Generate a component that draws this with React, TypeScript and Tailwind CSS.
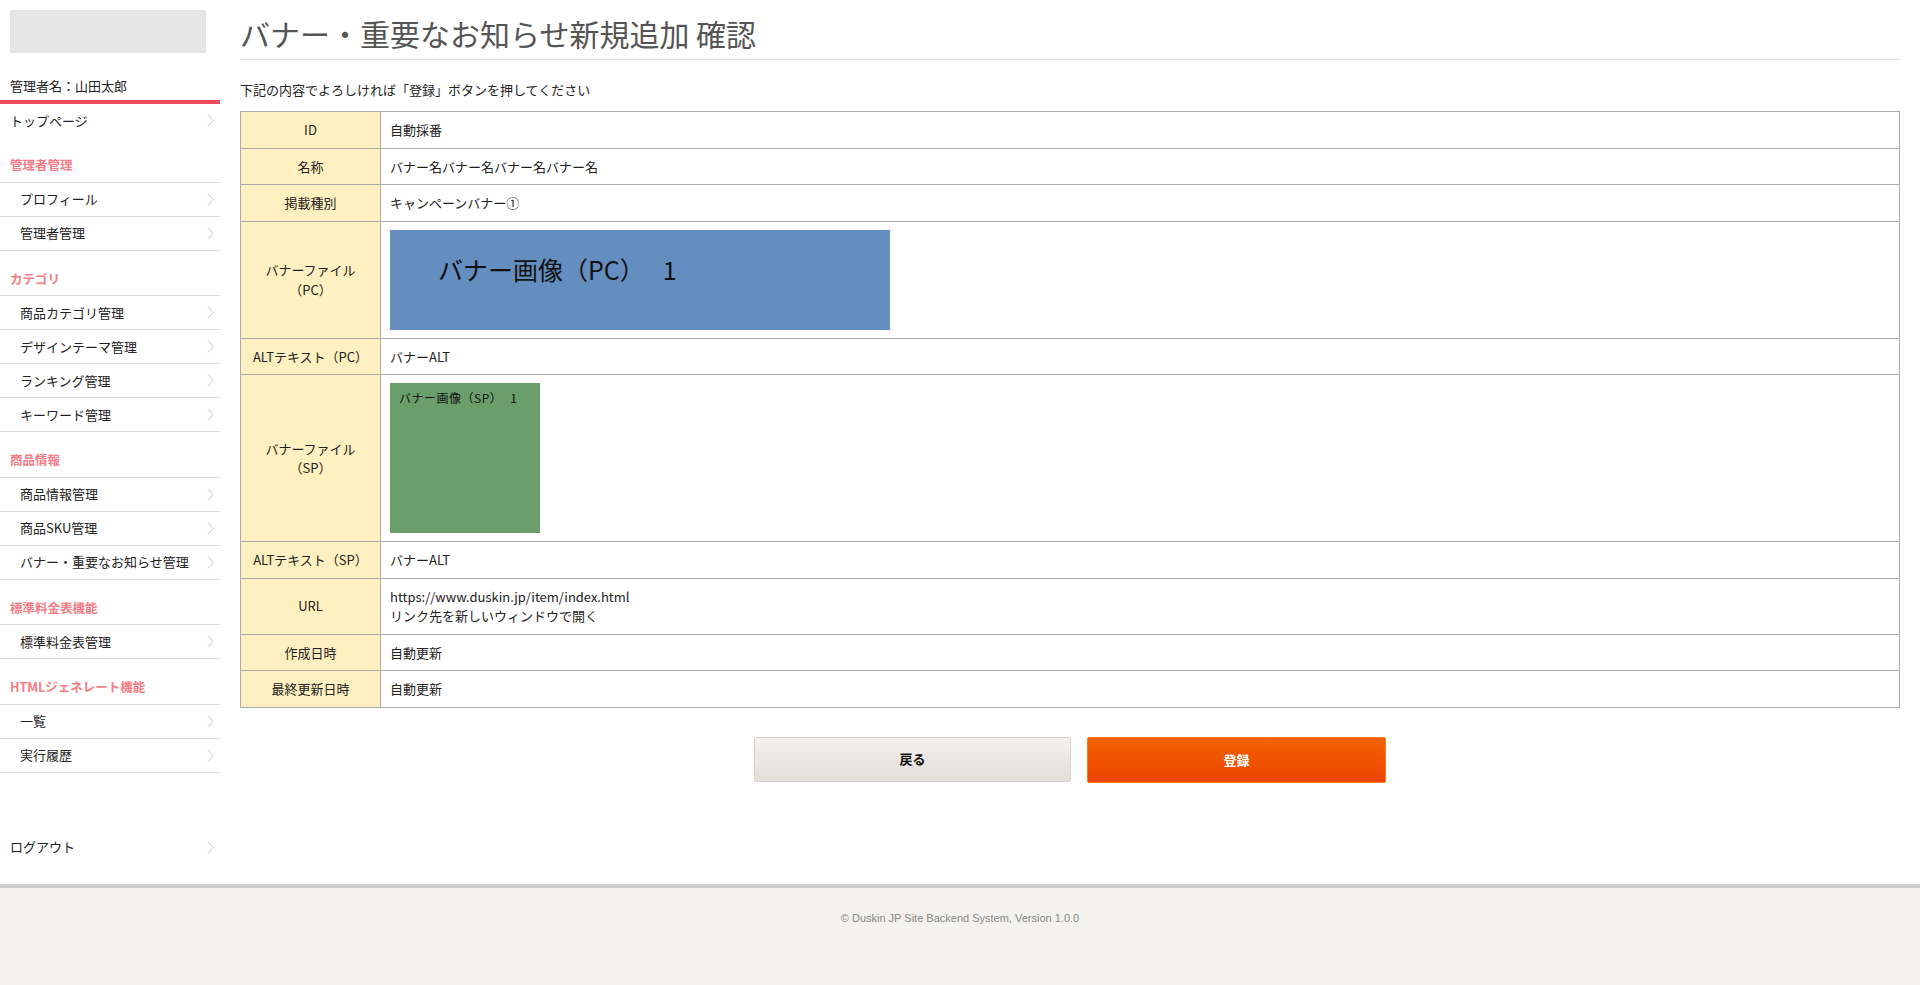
import React from 'react';

const FONT = { fontFamily: '"Noto Sans CJK JP", "Liberation Sans", sans-serif' };

interface NavSection {
  title: string;
  items: string[];
}

const sections: NavSection[] = [
  { title: '管理者管理', items: ['プロフィール', '管理者管理'] },
  { title: 'カテゴリ', items: ['商品カテゴリ管理', 'デザインテーマ管理', 'ランキング管理', 'キーワード管理'] },
  { title: '商品情報', items: ['商品情報管理', '商品SKU管理', 'バナー・重要なお知らせ管理'] },
  { title: '標準料金表機能', items: ['標準料金表管理'] },
  { title: 'HTMLジェネレート機能', items: ['一覧', '実行履歴'] },
];

const Chevron = () => (
  <svg width="7" height="13" viewBox="0 0 7 13" className="block shrink-0">
    <polyline points="1,0.5 6,6.5 1,12.5" fill="none" stroke="#c8c8c8" strokeWidth="1" />
  </svg>
);

const NavRow = ({ label }: { label: string }) => (
  <div className="flex h-[34px] items-center justify-between border-b border-[#dcdcdc] pl-[20px] pr-[6px] text-[13px] text-[#222]">
    <span>{label}</span>
    <Chevron />
  </div>
);

const Sidebar = () => (
  <aside className="w-[220px] shrink-0 pb-[20px]">
    <div className="ml-[10px] mt-[10px] h-[43px] w-[196px] bg-[#e5e5e5]" />
    <div className="mt-[23px] border-b-4 border-[#eb4c5c] px-[10px] pb-[4px] text-[13px] leading-[20px] text-[#222]">
      管理者名：山田太郎
    </div>
    <div className="flex h-[33px] items-center justify-between pl-[10px] pr-[6px] text-[13px] text-[#222]">
      <span>トップページ</span>
      <Chevron />
    </div>
    {sections.map((s) => (
      <div key={s.title}>
        <div className="border-b border-[#dcdcdc] pl-[10px] pb-[7.5px] pt-[19px] text-[12.5px] font-bold leading-[18px] text-[#f47c86]">
          {s.title}
        </div>
        {s.items.map((it) => (
          <NavRow key={it} label={it} />
        ))}
      </div>
    ))}
    <div className="mt-[58px] flex h-[33px] items-center justify-between pl-[10px] pr-[6px] text-[13px] text-[#222]">
      <span>ログアウト</span>
      <Chevron />
    </div>
  </aside>
);

const Row = ({ label, children }: { label: React.ReactNode; children: React.ReactNode }) => (
  <tr>
    <th className="w-[140px] border border-[#aaaaaa] bg-[#fef0c0] px-[6px] py-[8px] text-center align-middle text-[13px] font-normal leading-[19.5px] text-[#222]">
      {label}
    </th>
    <td className="border border-[#aaaaaa] px-[9px] py-[8px] align-middle text-[13px] leading-[19.5px] text-[#222]">
      {children}
    </td>
  </tr>
);

export default function App() {
  return (
    <div className="flex min-h-screen flex-col bg-white" style={FONT}>
      <div className="flex">
        <Sidebar />
        <main className="ml-[20px] mr-[20px] flex-1">
          <h1 className="border-b border-[#dddddd] pb-[8px] pt-[15px] text-[30px] font-normal leading-[36px] text-[#555]">
            バナー・重要なお知らせ新規追加 確認
          </h1>
          <p className="mb-[12px] mt-[21px] text-[13px] leading-[18px] text-[#222]">
            下記の内容でよろしければ「登録」ボタンを押してください
          </p>
          <table className="w-full border-collapse border border-[#aaaaaa]">
            <tbody>
              <Row label="ID">自動採番</Row>
              <Row label="名称">バナー名バナー名バナー名バナー名</Row>
              <Row label="掲載種別">キャンペーンバナー①</Row>
              <Row
                label={
                  <>
                    バナーファイル
                    <br />
                    （PC）
                  </>
                }
              >
                <div className="flex h-[100px] w-[500px] items-start bg-[#638ebf] pl-[48px] pt-[24px] text-[25px] leading-[30px] text-[#111]">
                  <span>バナー画像（PC）</span>
                  <span className="ml-[18px]">1</span>
                </div>
              </Row>
              <Row label="ALTテキスト（PC）">バナーALT</Row>
              <Row
                label={
                  <>
                    バナーファイル
                    <br />
                    （SP）
                  </>
                }
              >
                <div className="flex h-[150px] w-[150px] items-start bg-[#6a9f6c] pl-[9px] pt-[6px] text-[12px] leading-[18px] tracking-[0.5px] text-[#111]">
                  <span>バナー画像（SP）</span>
                  <span className="ml-[8px]">1</span>
                </div>
              </Row>
              <Row label="ALTテキスト（SP）">バナーALT</Row>
              <Row label="URL">
                https://www.duskin.jp/item/index.html
                <br />
                リンク先を新しいウィンドウで開く
              </Row>
              <Row label="作成日時">自動更新</Row>
              <Row label="最終更新日時">自動更新</Row>
            </tbody>
          </table>
          <div className="mt-[29px] flex justify-center gap-[16px]">
            <button className="h-[45px] w-[317px] rounded-[2px] border border-[#d6d3ce] bg-gradient-to-b from-[#f3f1ed] to-[#e2dfda] text-[13px] font-bold text-[#111]">
              戻る
            </button>
            <button className="h-[46px] w-[299px] rounded-[2px] border border-[#ff7a1a] bg-gradient-to-b from-[#f26200] to-[#ed4300] text-[13px] font-bold text-white">
              登録
            </button>
          </div>
        </main>
      </div>
      <footer className="flex min-h-[95px] flex-1 justify-center border-t-4 border-[#cccccc] bg-[#f3f2ee] pt-[23px]">
        <span
          className="text-[11px] leading-[14px] text-[#888]"
          style={{ fontFamily: '"Liberation Sans", sans-serif' }}
        >
          © Duskin JP Site Backend System, Version 1.0.0
        </span>
      </footer>
    </div>
  );
}
